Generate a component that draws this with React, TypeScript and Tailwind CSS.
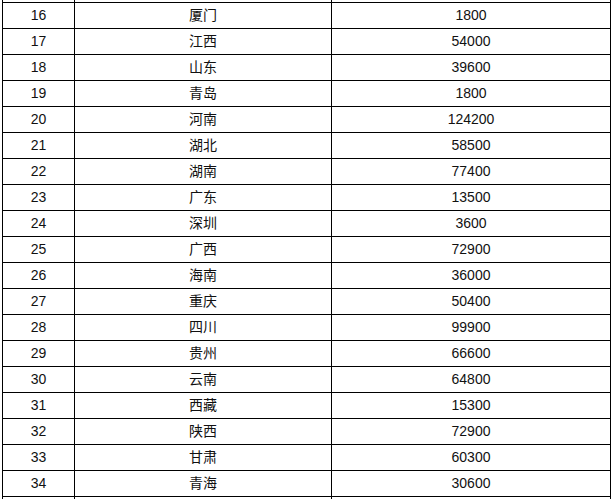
import React from "react";

const rows: [string, string, string][] = [
  ["", "", ""],
  ["16", "厦门", "1800"],
  ["17", "江西", "54000"],
  ["18", "山东", "39600"],
  ["19", "青岛", "1800"],
  ["20", "河南", "124200"],
  ["21", "湖北", "58500"],
  ["22", "湖南", "77400"],
  ["23", "广东", "13500"],
  ["24", "深圳", "3600"],
  ["25", "广西", "72900"],
  ["26", "海南", "36000"],
  ["27", "重庆", "50400"],
  ["28", "四川", "99900"],
  ["29", "贵州", "66600"],
  ["30", "云南", "64800"],
  ["31", "西藏", "15300"],
  ["32", "陕西", "72900"],
  ["33", "甘肃", "60300"],
  ["34", "青海", "30600"],
  ["", "", ""],
];

export default function App() {
  return (
    <div
      className="w-[613px] h-[499px] overflow-hidden bg-white text-[14px] text-[#111]"
      style={{ fontFamily: '"Liberation Sans", "Noto Sans CJK SC", sans-serif' }}
    >
      <div className="mt-[-23px] ml-[2px] w-[609px] border-l border-black">
        {rows.map((r, i) => (
          <div key={i} className="flex h-[26px] border-b border-black">
            <div className="w-[72px] border-r border-black flex items-center justify-center">{r[0]}</div>
            <div className="w-[257px] border-r border-black flex items-center justify-center">{r[1]}</div>
            <div className="w-[279px] border-r border-black flex items-center justify-center">{r[2]}</div>
          </div>
        ))}
      </div>
    </div>
  );
}
